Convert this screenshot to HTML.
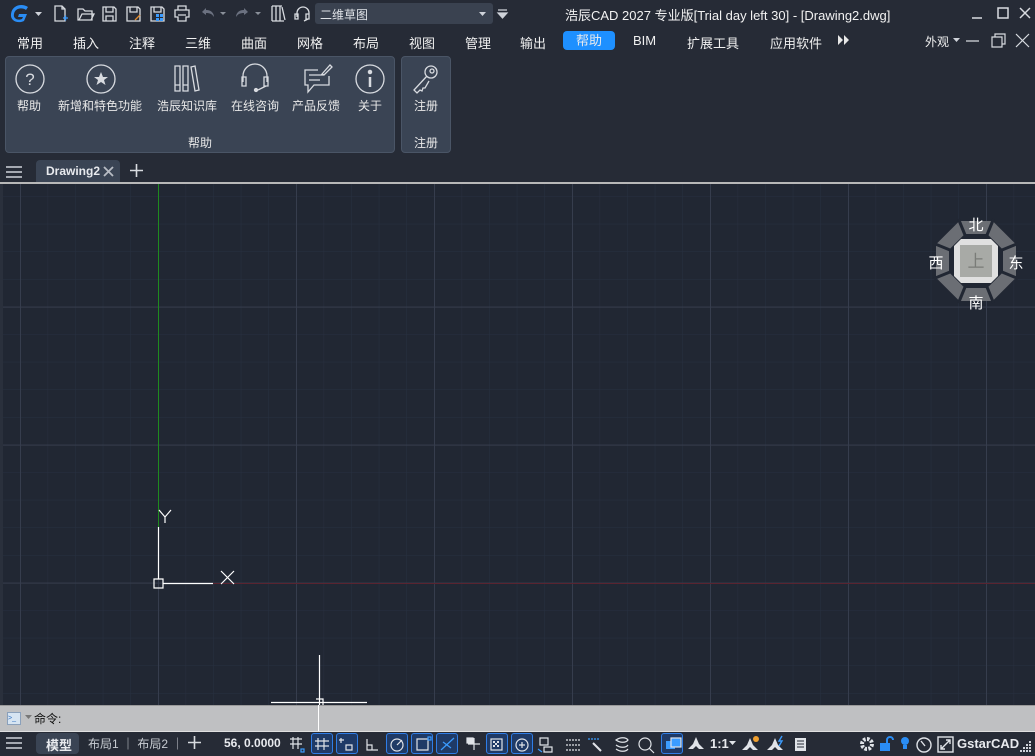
<!DOCTYPE html>
<html><head><meta charset="utf-8">
<style>
*{margin:0;padding:0;box-sizing:border-box}
body{width:1035px;height:756px;overflow:hidden;background:#262b36;font-family:"Liberation Sans","Noto Sans CJK SC",sans-serif;color:#e8eaee;position:relative;font-size:12px}
.a{position:absolute;white-space:nowrap}
.menu span{position:absolute;top:33px;font-size:13px;color:#f0f0f0}
.panel{position:absolute;background:#3a4454;border:1px solid #4a5566;border-radius:4px}
.lbl{position:absolute;font-size:12px;color:#e8e8e8;text-align:center}
svg{position:absolute;overflow:visible}
.ic{stroke:#d8dbe0;fill:none;stroke-width:1.3}
.sb{position:absolute;top:733px;width:22px;height:21px;border:1px solid #2f7de6;border-radius:3px;background:#1f3a66}
</style></head><body>
<svg style="left:8px;top:3px" width="24" height="22"><path d="M20 4 C14 0 4 2 3 11 C2 18 10 21 16 18 L19 11 L11 11 L10 14 L15 14 L14 16 C9 18 5 15 6 11 C7 5 14 4 18 7Z" fill="#2a8df5"/></svg>
<svg style="left:35px;top:12px" width="8" height="5"><path d="M0 0H7L3.5 4Z" fill="#cfd3da"/></svg>
<svg style="left:52px;top:5px" width="260" height="18" class="ic">
<path d="M3 1H10L13 4V16H3Z M10 1V4H13"/><path d="M11 13h5M13.5 10.5v5" stroke="#3b9cff"/>
<path d="M26 4H31L33 6H40V15H26Z M27 15L30 9H42L39 15"/>
<path d="M51 2H62L64 4V16H51Z M54 2V7H61V2 M54 16V11H61V16"/>
<path d="M75 2H86L88 4V16H75Z M78 2V7H85V2" /><path d="M83 15L88 10" stroke="#e28a2b"/>
<path d="M99 2H110L112 4V16H99Z M102 2V7H109V2"/><rect x="104" y="9" width="3" height="3" fill="#3b9cff" stroke="none"/><rect x="108" y="9" width="3" height="3" fill="#3b9cff" stroke="none"/><rect x="104" y="13" width="3" height="3" fill="#3b9cff" stroke="none"/><rect x="108" y="13" width="3" height="3" fill="#3b9cff" stroke="none"/>
<path d="M126 5V1H134V5 M123 5H137V12H134V16H126V12H123Z M126 10H134"/>
<path d="M150 7L154 3V5C160 5 162 9 162 12C160 9 158 8 154 8V10Z" fill="#6b7180" stroke="none"/>
<path d="M168 7H174L171 10Z" fill="#8a909a" stroke="none"/>
<path d="M196 7L192 3V5C186 5 184 9 184 12C186 9 188 8 192 8V10Z" fill="#6b7180" stroke="none"/>
<path d="M203 7H209L206 10Z" fill="#8a909a" stroke="none"/>
<path d="M220 1V16M224 1V16M228 1V16M220 1H230M220 16H232 M230 2L233 15"/>
<path d="M245 12V8A6 6 0 0 1 257 8V12 M243 9H246V14H243Z M254 9H257V14H254Z M256 14L252 16"/>
</svg>
<div class="a" style="left:315px;top:3px;width:178px;height:21px;background:#3a4250;border-radius:3px;font-size:12px;padding:3px 5px;color:#dfe2e7">二维草图</div>
<svg style="left:479px;top:12px" width="8" height="5"><path d="M0 0H7L3.5 4Z" fill="#cfd3da"/></svg>
<svg style="left:498px;top:9px" width="10" height="10"><path d="M0 1H9 M0 4H9L4.5 9Z" stroke="#cfd3da" fill="#cfd3da" stroke-width="1.2"/></svg>
<div class="a" style="left:565px;top:5px;font-size:13px;color:#f2f2f2">浩辰CAD 2027 专业版[Trial day left 30] - [Drawing2.dwg]</div>
<svg style="left:970px;top:6px" width="60" height="16" stroke="#d8dbe0" fill="none" stroke-width="1.5"><path d="M2 12H12 M28 2H38V12H28Z M50 2L60 12M60 2L50 12"/></svg>
<div class="menu">
<span style="left:17px">常用</span><span style="left:73px">插入</span><span style="left:129px">注释</span><span style="left:185px">三维</span><span style="left:241px">曲面</span><span style="left:297px">网格</span><span style="left:353px">布局</span><span style="left:409px">视图</span><span style="left:465px">管理</span><span style="left:520px">输出</span>
<span style="left:633px">BIM</span><span style="left:687px">扩展工具</span><span style="left:770px">应用软件</span><span style="left:925px;font-size:12px">外观</span>
</div>
<div class="a" style="left:563px;top:31px;width:52px;height:19px;background:#1e90ff;border-radius:4px;text-align:center;font-size:13px;line-height:19px">帮助</div>
<svg style="left:838px;top:35px" width="12" height="10"><path d="M0 0L5 5L0 10ZM6 0L11 5L6 10Z" fill="#e8e8e8"/></svg>
<svg style="left:953px;top:38px" width="7" height="4"><path d="M0 0H7L3.5 4Z" fill="#cfd3da"/></svg>
<svg style="left:965px;top:33px" width="66" height="16" stroke="#d8dbe0" fill="none" stroke-width="1.2"><path d="M1 8H14 M27 4H37V14H27Z M30 4V1H40V11H37 M51 1L64 14M64 1L51 14"/></svg>
<div class="panel" style="left:5px;top:56px;width:390px;height:97px"></div>
<div class="panel" style="left:401px;top:56px;width:50px;height:97px"></div>
<svg style="left:0;top:60px" width="460" height="35" class="ic" stroke-width="1.4">
<circle cx="30" cy="19" r="14"/><text x="30" y="25" font-size="17" fill="#d8dbe0" stroke="none" text-anchor="middle" font-family="Liberation Sans">?</text>
<circle cx="101" cy="19" r="14"/><path d="M101 12L103 17H108L104 20L105.5 25L101 22L96.5 25L98 20L94 17H99Z" fill="#d8dbe0" stroke="none"/>
<path d="M175 6H180V31H175Z M183 6H188V31H183Z M191 7L195 6L199 30L195 31Z M175 25H180M183 25H188"/>
<path d="M243 22V16A12 12 0 0 1 267 16V22 M242 17H246V26H242Z M264 17H268V26H264Z M266 26L258 30"/><circle cx="256" cy="30" r="1.5" fill="#d8dbe0"/>
<path d="M318 10H305V25H308V32L314 25H329V16 M309 15H324M309 20H320 M322 14L330 5L332 7L324 15Z"/>
<circle cx="370" cy="19" r="14"/><path d="M370 17V27" stroke-width="2.5"/><circle cx="370" cy="12" r="1.6" fill="#d8dbe0"/>
<circle cx="431" cy="12" r="6"/><circle cx="432" cy="11" r="2"/><path d="M427 16L414 30L417 33L420 30L422 31L423 28L425 28L429 21"/>
</svg>
<div class="lbl" style="left:17px;top:97px">帮助</div>
<div class="lbl" style="left:58px;top:97px">新增和特色功能</div>
<div class="lbl" style="left:157px;top:97px">浩辰知识库</div>
<div class="lbl" style="left:231px;top:97px">在线咨询</div>
<div class="lbl" style="left:292px;top:97px">产品反馈</div>
<div class="lbl" style="left:358px;top:97px">关于</div>
<div class="lbl" style="left:414px;top:97px">注册</div>
<div class="lbl" style="left:188px;top:134px">帮助</div>
<div class="lbl" style="left:414px;top:134px">注册</div>
<svg style="left:6px;top:166px" width="18" height="12" stroke="#cfd3da" stroke-width="1.6"><path d="M0 1H16M0 6H16M0 11H16"/></svg>
<div class="a" style="left:36px;top:160px;width:84px;height:22px;background:#3a4454;border-radius:4px 4px 0 0"></div>
<div class="a" style="left:46px;top:164px;font-size:12px;font-weight:bold;color:#e8eaee">Drawing2</div>
<svg style="left:103px;top:166px" width="11" height="11" stroke="#b8bcc4" stroke-width="1.8"><path d="M1 1L10 10M10 1L1 10"/></svg>
<svg style="left:129px;top:163px" width="16" height="16" stroke="#d8dbe0" stroke-width="1.6"><path d="M7.5 1V14M1 7.5H14"/></svg>
<div class="a" style="left:0;top:182px;width:1035px;height:2px;background:#b8b8b8"></div>
<svg style="left:0;top:184px" width="1035" height="521">
<defs>
<pattern id="mn" x="20" y="-15.4" width="27.6" height="27.6" patternUnits="userSpaceOnUse"><path d="M0 0H27.6M0 0V27.6" stroke="#283040" stroke-width="1" fill="none"/></pattern>
<pattern id="mj" x="20" y="-15.4" width="138" height="138" patternUnits="userSpaceOnUse"><path d="M0 0.5H138M0.5 0V138" stroke="#363d4d" stroke-width="1" fill="none"/></pattern>
</defs>
<rect width="1035" height="521" fill="#212733"/>
<rect width="1035" height="521" fill="url(#mn)"/>
<rect width="1035" height="521" fill="url(#mj)"/>
<rect x="0" y="0" width="3" height="521" fill="#2a303c"/>
<path d="M158.5 0V343" stroke="#1f8a1f" stroke-width="1"/>
<path d="M213 399.5H1035" stroke="#5a2430" stroke-width="1"/>
<g stroke="#ffffff" stroke-width="1.2" fill="none">
<path d="M158.5 343V395 M163 399.5H213 M154 395H163V404H154Z"/>
<path d="M159 326L165 333L171 326 M165 333V339"/>
<path d="M221 387L234 400M234 387L221 400"/>
<path d="M319.5 471V521 M271 518.5H367 M316 515H323V521"/>
</g>
<g transform="translate(976,77)">
<polygon points="-16.6,-40 16.6,-40 40,-16.6 40,16.6 16.6,40 -16.6,40 -40,16.6 -40,-16.6" fill="#6b6e74"/>
<polygon points="-11.2,-27 11.2,-27 27,-11.2 27,11.2 11.2,27 -11.2,27 -27,11.2 -27,-11.2" fill="#212733"/>
<g stroke="#212733" stroke-width="3"><path d="M-17.5 -42L-11 -26M17.5 -42L11 -26M-17.5 42L-11 26M17.5 42L11 26M-42 -17.5L-26 -11M-42 17.5L-26 11M42 -17.5L26 -11M42 17.5L26 11"/></g>
<polygon points="-15,-22 15,-22 22,-15 22,15 15,22 -15,22 -22,15 -22,-15" fill="#e0e0e0"/>
<rect x="-16" y="-16" width="32" height="32" fill="#a8aaa6"/>
<text y="6" font-size="17" text-anchor="middle" fill="#7a7c78" font-family="Noto Sans CJK SC">上</text>
<g font-size="15" fill="#ffffff" text-anchor="middle" font-family="Noto Sans CJK SC"><text y="-31">北</text><text y="47">南</text><text x="-40" y="7">西</text><text x="40" y="7">东</text></g>
</g>
</svg>
<div class="a" style="left:0;top:705px;width:1035px;height:26px;background:#bfc0c2;border-top:1px solid #9a9a9a"></div>
<div class="a" style="left:7px;top:712px;width:14px;height:13px;background:#d6e4f2;border:1px solid #8aa0bb;font-size:7px;color:#3070c0;line-height:11px">&gt;_</div>
<svg style="left:25px;top:715px" width="7" height="4"><path d="M0 0H7L3.5 4Z" fill="#777"/></svg>
<div class="a" style="left:34px;top:710px;font-size:12px;color:#111">命令:</div>
<div class="a" style="left:318px;top:705px;width:1px;height:26px;background:#fff"></div>
<div class="a" style="left:0;top:731px;width:1035px;height:25px;background:#262b36;border-top:1px solid #e0e0e0"></div>
<svg style="left:6px;top:737px" width="18" height="12" stroke="#cfd3da" stroke-width="1.6"><path d="M0 1H16M0 6H16M0 11H16"/></svg>
<div class="a" style="left:36px;top:733px;width:43px;height:21px;background:#3a4454;border-radius:4px"></div>
<div class="a" style="left:46px;top:735px;font-size:13px;font-weight:bold">模型</div>
<div class="a" style="left:88px;top:735px;font-size:12px;color:#c8ccd2">布局1 ｜ 布局2 ｜</div>
<svg style="left:187px;top:735px" width="16" height="16" stroke="#d8dbe0" stroke-width="1.6"><path d="M7.5 1V14M1 7.5H14"/></svg>
<div class="a" style="left:224px;top:736px;font-size:12px;font-weight:bold">56, 0.0000</div>
<div class="sb" style="left:311px"></div><div class="sb" style="left:336px"></div><div class="sb" style="left:386px"></div><div class="sb" style="left:411px"></div><div class="sb" style="left:436px"></div><div class="sb" style="left:486px"></div><div class="sb" style="left:511px"></div><div class="sb" style="left:661px"></div>
<svg style="left:288px;top:735px" width="400" height="20" stroke="#e0e3e8" fill="none" stroke-width="1.2">
<path d="M2 4H14M2 9H14M5 2V14M10 2V14" /><rect x="13" y="14" width="3" height="3" stroke="#3b9cff"/>
<path d="M27 6H41M27 11H41M30 3V15M36 3V15"/>
<path d="M53 3V8M51 5H56 M58 10H64V15H58Z"/>
<path d="M79 4V15H90 M79 10H84V15"/>
<circle cx="109" cy="10" r="6"/><path d="M109 10L114 5"/>
<path d="M129 4H140V15H129Z"/><rect x="140" y="2" width="3" height="3" stroke="#3b9cff"/>
<path d="M153 15L166 3 M155 7L163 13" stroke="#3b9cff"/>
<path d="M180 9H192M186 3V15"/><rect x="179" y="3" width="6" height="5" fill="#e0e3e8"/>
<rect x="203" y="4" width="11" height="11"/><path d="M205 6h2v2h-2zM209 6h2v2h-2zM207 8h2v2h-2zM205 10h2v2h-2zM209 10h2v2h-2z" fill="#e0e3e8" stroke="none"/>
<circle cx="234" cy="10" r="6"/><path d="M231 10H237M234 7V13"/>
<path d="M252 3H260V10H252Z M256 12H264V17H256Z" /><path d="M250 14L254 17" stroke="#3b9cff"/>
<path d="M278 5H292M278 10H292M278 15H292" stroke-dasharray="2 1"/>
<path d="M300 4H312" stroke-dasharray="2 1" stroke="#3b9cff"/><path d="M305 8L313 16" stroke-width="2"/>
<path d="M328 5C332 2 338 2 340 5C338 8 332 8 328 5Z M328 10C332 13 338 13 340 10 M328 14C332 17 338 17 340 14"/>
<circle cx="357" cy="9" r="6"/><path d="M361 13L366 18"/>
<rect x="378" y="6" width="9" height="8" fill="#3b9cff" stroke="none"/><rect x="383" y="3" width="10" height="9" fill="#3b9cff" stroke="#e0e3e8"/>
</svg>
<svg style="left:688px;top:737px" width="20" height="16"><path d="M8 0L11 7L16 12H11L8 9L5 12H0L5 7Z" fill="#e0e3e8"/></svg>
<div class="a" style="left:710px;top:736px;font-size:13px;font-weight:bold">1:1</div>
<svg style="left:729px;top:741px" width="7" height="4"><path d="M0 0H7L3.5 4Z" fill="#e0e3e8"/></svg>
<svg style="left:742px;top:735px" width="70" height="18"><path d="M8 3L11 10L16 15H11L8 12L5 15H0L5 10Z" fill="#e0e3e8"/><circle cx="14" cy="4" r="3" fill="#f0a030"/><path d="M33 3L36 10L41 15H36L33 12L30 15H25L30 10Z" fill="#e0e3e8"/><path d="M40 1L37 6H40L37 11" stroke="#3b9cff" fill="none" stroke-width="1.4"/><rect x="53" y="3" width="11" height="13" fill="#e0e3e8"/><path d="M55 6H62M55 9H62M55 12H62" stroke="#262b36"/></svg>
<svg style="left:858px;top:735px" width="160" height="18" fill="none" stroke="#e0e3e8" stroke-width="1.4">
<circle cx="9" cy="9" r="5" stroke-width="4" stroke-dasharray="2.5 1.4"/><circle cx="9" cy="9" r="2" fill="#262b36" stroke="none"/>
<rect x="22" y="8" width="10" height="8" fill="#2a8df5" stroke="none"/><path d="M29 8V5A3 3 0 0 1 35 5" stroke="#2a8df5" stroke-width="2"/>
<circle cx="47" cy="6" r="4" fill="#2a8df5" stroke="none"/><path d="M45 10H49V14H45Z" fill="#2a8df5" stroke="none"/>
<circle cx="66" cy="10" r="7"/><path d="M63 6L67 11"/>
<rect x="80" y="2" width="15" height="15"/><path d="M83 14L92 5M88 5H92V9M83 10V14H87"/>
</svg>
<div class="a" style="left:957px;top:736px;font-size:13px;font-weight:bold">GstarCAD</div>
<svg style="left:1019px;top:741px" width="14" height="12" fill="#cfd3da"><rect x="10" y="0" width="2" height="2"/><rect x="7" y="3" width="2" height="2"/><rect x="10" y="3" width="2" height="2"/><rect x="4" y="6" width="2" height="2"/><rect x="7" y="6" width="2" height="2"/><rect x="10" y="6" width="2" height="2"/><rect x="1" y="9" width="2" height="2"/><rect x="4" y="9" width="2" height="2"/><rect x="7" y="9" width="2" height="2"/><rect x="10" y="9" width="2" height="2"/></svg>
</body></html>
